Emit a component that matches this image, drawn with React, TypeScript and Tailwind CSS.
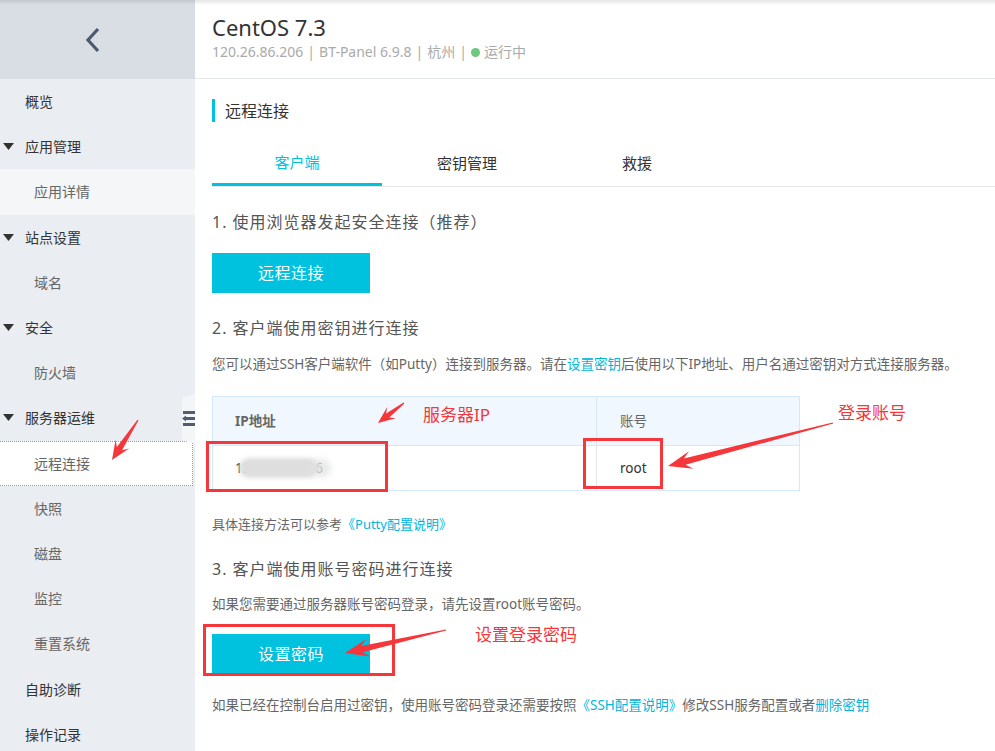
import React from 'react';

const RED = '#f5363a';

type MenuItem = { label: string; kind: 'top' | 'group' | 'sub'; active?: boolean; hover?: boolean };

const MENU: MenuItem[] = [
  { label: '概览', kind: 'top' },
  { label: '应用管理', kind: 'group' },
  { label: '应用详情', kind: 'sub', hover: true },
  { label: '站点设置', kind: 'group' },
  { label: '域名', kind: 'sub' },
  { label: '安全', kind: 'group' },
  { label: '防火墙', kind: 'sub' },
  { label: '服务器运维', kind: 'group' },
  { label: '远程连接', kind: 'sub', active: true },
  { label: '快照', kind: 'sub' },
  { label: '磁盘', kind: 'sub' },
  { label: '监控', kind: 'sub' },
  { label: '重置系统', kind: 'sub' },
  { label: '自助诊断', kind: 'top' },
  { label: '操作记录', kind: 'top' },
];

/** Tapered annotation arrow, from tail (x1,y1) to tip (x2,y2) */
function arrowPoints(x1: number, y1: number, x2: number, y2: number, head = 20, wing = 8, shaft = 3): string {
  const dx = x2 - x1;
  const dy = y2 - y1;
  const len = Math.hypot(dx, dy);
  const ux = dx / len;
  const uy = dy / len;
  const nx = -uy;
  const ny = ux;
  const bx = x2 - ux * head;
  const by = y2 - uy * head;
  const jx = x2 - ux * head * 0.72;
  const jy = y2 - uy * head * 0.72;
  const pts = [
    [x1 + nx * 0.6, y1 + ny * 0.6],
    [jx + nx * shaft, jy + ny * shaft],
    [bx + nx * wing, by + ny * wing],
    [x2, y2],
    [bx - nx * wing, by - ny * wing],
    [jx - nx * shaft, jy - ny * shaft],
    [x1 - nx * 0.6, y1 - ny * 0.6],
  ];
  return pts.map(([a, b]) => `${a.toFixed(1)},${b.toFixed(1)}`).join(' ');
}

function Sidebar(): React.JSX.Element {
  return (
    <aside className="relative w-[195px] shrink-0 bg-[#eaedf1] h-full">
      {/* collapse header */}
      <div className="h-[79px] bg-[#d9dee5] flex items-center justify-center">
        <svg width="20" height="28" viewBox="0 0 20 28" className="ml-[-8px]">
          <polyline points="14,3 4,14 14,25" fill="none" stroke="#4b5a6e" strokeWidth="3.2" />
        </svg>
      </div>

      <nav>
        {MENU.map((m) => {
          const base = 'h-[45.2px] flex items-center text-[14px]';
          if (m.kind === 'sub') {
            return (
              <div
                key={m.label}
                className={
                  base +
                  ' pl-[34px] text-[#666] ' +
                  (m.active
                    ? 'bg-white border-y border-r border-dotted border-[#9a9a9a] mr-[2px]'
                    : m.hover
                      ? 'bg-[#f4f6f8]'
                      : '')
                }
              >
                {m.label}
              </div>
            );
          }
          return (
            <div key={m.label} className={base + ' pl-[25px] text-[#333] relative'}>
              {m.kind === 'group' && (
                <svg width="11" height="7" viewBox="0 0 11 7" className="absolute left-[3px] top-[19px]">
                  <polygon points="0,0 11,0 5.5,7" fill="#333" />
                </svg>
              )}
              {m.label}
            </div>
          );
        })}
      </nav>

      {/* side drawer tab */}
      <div className="absolute right-0 top-[394px]">
        <svg width="15" height="50" viewBox="0 0 15 50">
          <polygon points="15,0 15,50 2,46 2,4" fill="#f4f5f7" />
          <rect x="3" y="17" width="12" height="3" fill="#4f5d70" />
          <rect x="6" y="23" width="9" height="3" fill="#4f5d70" />
          <polygon points="2,24.5 6,21.5 6,27.5" fill="#4f5d70" />
          <rect x="3" y="29" width="12" height="3" fill="#4f5d70" />
        </svg>
      </div>
    </aside>
  );
}

function PrimaryButton({ children }: { children: React.ReactNode }): React.JSX.Element {
  return (
    <button className="w-[158px] h-[40px] bg-[#00c1de] text-white text-[16px] tracking-[0.5px] flex items-center justify-center">
      {children}
    </button>
  );
}

function Link({ children }: { children: React.ReactNode }): React.JSX.Element {
  return <span className="text-[#00b6dc]">{children}</span>;
}

function Main(): React.JSX.Element {
  return (
    <main className="flex-1 bg-white h-full">
      {/* instance header */}
      <header className="h-[79px] border-b border-[#e4e7eb] pl-[17px] pt-[12px]">
        <h1 className="text-[22px] leading-[30px] text-[#333]">CentOS 7.3</h1>
        <div className="text-[14px] leading-[20px] text-[#aaa] flex items-center gap-[4px]">
          <span>120.26.86.206</span>
          <span>|</span>
          <span>BT-Panel 6.9.8</span>
          <span>|</span>
          <span>杭州</span>
          <span>|</span>
          <span className="flex items-center gap-[4px]">
            <span className="inline-block w-[9px] h-[9px] rounded-full bg-[#6cc97f]" />
            运行中
          </span>
        </div>
      </header>

      <div className="pl-[17px]">
        {/* section title */}
        <div className="mt-[20px] h-[23px] flex items-center">
          <span className="w-[3px] h-[23px] bg-[#00c1de]" />
          <span className="ml-[10px] text-[16px] text-[#333]">远程连接</span>
        </div>

        {/* tabs */}
        <div className="mt-[18px] h-[47px] flex border-b border-[#e6e6e6]">
          <div className="w-[170px] h-full flex items-center justify-center text-[15px] text-[#00c1de] border-b-[3px] border-[#00c1de] -mb-px pt-[2px]">
            客户端
          </div>
          <div className="w-[170px] h-full flex items-center justify-center text-[15px] text-[#333]">密钥管理</div>
          <div className="w-[170px] h-full flex items-center justify-center text-[15px] text-[#333]">救援</div>
        </div>

        <p className="mt-[24px] text-[16px] leading-[22px] tracking-[1px] text-[#555]">1. 使用浏览器发起安全连接（推荐）</p>
        <div className="mt-[20px]">
          <PrimaryButton>远程连接</PrimaryButton>
        </div>

        <p className="mt-[24px] text-[16px] leading-[22px] tracking-[1px] text-[#555]">2. 客户端使用密钥进行连接</p>
        <p className="mt-[16px] text-[13.5px] leading-[18px] text-[#666] whitespace-nowrap">
          您可以通过SSH客户端软件（如Putty）连接到服务器。请在<Link>设置密钥</Link>后使用以下IP地址、用户名通过密钥对方式连接服务器。
        </p>

        {/* connection table */}
        <div className="mt-[23px] w-[588px] border border-[#d5e8fb] text-[13.5px]">
          <div className="h-[49px] bg-[#f0f7ff] flex border-b border-[#d5e8fb]">
            <div className="w-[384px] pl-[22px] flex items-center text-[#666] font-bold border-r border-[#d5e8fb]">IP地址</div>
            <div className="flex-1 pl-[23px] flex items-center text-[#666]">账号</div>
          </div>
          <div className="h-[44px] flex">
            <div className="w-[384px] pl-[22px] flex items-center text-[#333] border-r border-[#e6e6e6] relative">
              <span>120.26.86.206</span>
              <span className="absolute left-[26px] top-[12px] w-[80px] h-[20px] rounded-[10px] bg-[#dedede] blur-[2px]" />
              <span className="absolute left-[98px] top-[13px] w-[20px] h-[18px] rounded-[9px] bg-[#e4e4e4] opacity-80 blur-[3px]" />
            </div>
            <div className="flex-1 pl-[23px] flex items-center text-[#333]">root</div>
          </div>
        </div>

        <p className="mt-[24px] text-[13px] leading-[18px] text-[#666]">
          具体连接方法可以参考<Link>《Putty配置说明》</Link>
        </p>

        <p className="mt-[25px] text-[16px] leading-[22px] tracking-[1px] text-[#555]">3. 客户端使用账号密码进行连接</p>
        <p className="mt-[15px] text-[13.5px] leading-[18px] text-[#666]">如果您需要通过服务器账号密码登录，请先设置root账号密码。</p>
        <div className="mt-[21px]">
          <PrimaryButton>设置密码</PrimaryButton>
        </div>

        <p className="mt-[22px] text-[13.5px] leading-[18px] text-[#666] whitespace-nowrap">
          如果已经在控制台启用过密钥，使用账号密码登录还需要按照<Link>《SSH配置说明》</Link>修改SSH服务配置或者<Link>删除密钥</Link>
        </p>
      </div>
    </main>
  );
}

function Annotations(): React.JSX.Element {
  return (
    <div className="absolute inset-0 pointer-events-none">
      <svg width="995" height="751" className="absolute inset-0">
        <g fill={RED}>
          <polygon points={arrowPoints(138, 420, 112, 460, 19, 8, 3)} />
          <polygon points={arrowPoints(404, 403, 378, 423, 17, 7, 2.6)} />
          <polygon points={arrowPoints(833, 423, 668, 466, 24, 9, 3.2)} />
          <polygon points={arrowPoints(446, 630, 345, 653, 24, 9, 3.2)} />
        </g>
        <g fill="none" stroke={RED} strokeWidth="3">
          <rect x="207.5" y="442.5" width="179" height="48" />
          <rect x="584.5" y="439.5" width="77" height="48" />
          <rect x="204.5" y="625.5" width="189" height="49" />
        </g>
      </svg>
      <span className="absolute left-[423px] top-[403px] text-[17px] leading-[24px] text-[#f5363a]">服务器IP</span>
      <span className="absolute left-[838px] top-[401px] text-[17px] leading-[24px] text-[#f5363a]">登录账号</span>
      <span className="absolute left-[475px] top-[623px] text-[17px] leading-[24px] text-[#f5363a]">设置登录密码</span>
    </div>
  );
}

export default function App(): React.JSX.Element {
  return (
    <div
      className="relative w-[995px] h-[751px] overflow-hidden flex"
      style={{ fontFamily: '"Noto Sans", "Noto Sans CJK SC", sans-serif' }}
    >
      <Sidebar />
      <Main />
      <Annotations />
      <div className="absolute left-0 right-0 top-0 h-[5px] bg-gradient-to-b from-[rgba(0,0,0,0.1)] to-transparent" />
    </div>
  );
}
